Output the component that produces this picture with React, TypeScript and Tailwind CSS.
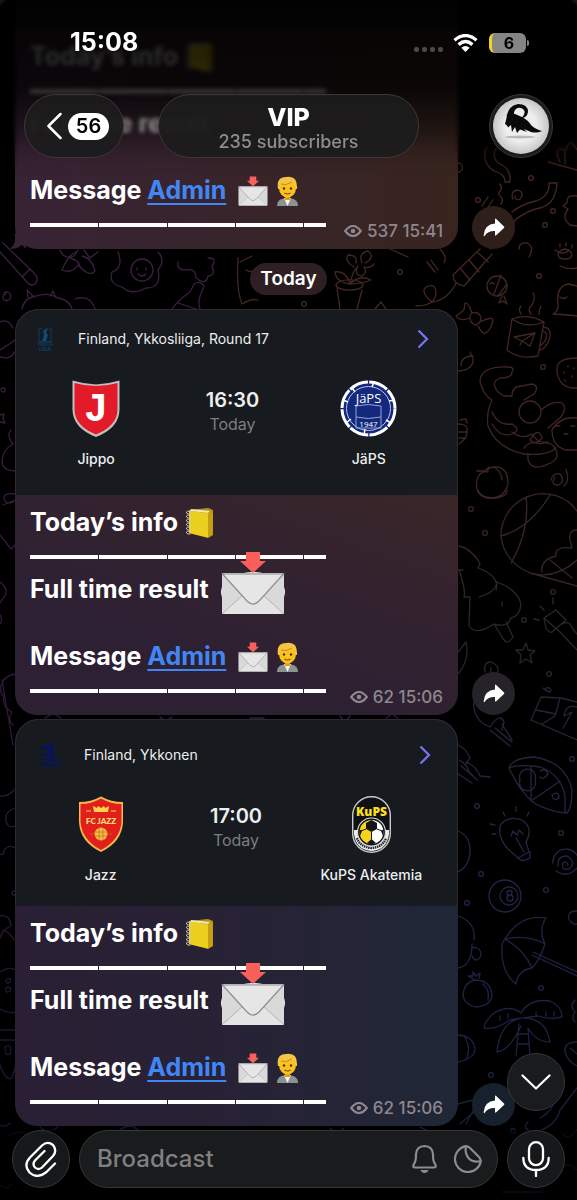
import type { ReactNode } from 'react';

interface MatchCardProps {
  league: string;
  leagueLogo: ReactNode;
  home: string;
  homeCrest: ReactNode;
  away: string;
  awayCrest: ReactNode;
  time: string;
  className?: string;
  headerClassName: string;
  gridClassName: string;
}

interface MessageProps {
  views: string;
  time: string;
  media: ReactNode;
  bodyClassName: string;
  bubbleClassName?: string;
  shareClassName: string;
  tail?: boolean;
}

const leftDoodles = [
  // pencil, bow, egg
  'M3 243 L34 273 M0 252 L26 281 M34 273 Q40 279 35 284 Q31 287 26 281 M30 269 L22 277',
  'M62 270 Q68 255 76 252 M62 270 Q72 274 78 265 Q90 278 95 271 Q92 258 82 256 M70 258 q8 2 10 8',
  'M118 252 Q124 268 112 272 Q108 284 122 287 Q132 296 146 288 Q162 288 158 270 Q166 260 158 252 M131 270 a11 11 0 1 0 22 0 a11 11 0 1 0 -22 0 M137 268 v2 M146 268 v2 M138 274 q4 4 8 0',
  // drumstick and bottle
  'M178 262 Q176 270 186 270 Q196 268 196 278 Q206 286 208 276 Q216 276 212 266 Q218 258 208 258 M172 309 Q178 300 190 292 L194 284 Q200 280 204 286 L200 296 Q198 304 200 309 M178 303 L196 309',
  // cake
  'M22 309 Q24 298 36 296 Q48 292 58 298 Q70 300 72 309 M28 297 L27 290 L33 296 M50 296 L53 291 L56 298 M75 299 Q90 294 95 309',
  'M4 293 q5 -3 7 3 q-1 6 -7 4 q-3 -5 2 -6 M0 322 Q8 318 13 328 M0 350 Q10 344 15 340 M0 357 Q12 360 14 352',
  'M0 415 l4 -1 -1 5 2 4 -5 -1 M11 430 Q6 435 13 444 Q2 450 2 462 Q2 470 15 471 M15 494 Q4 492 4 499 Q7 505 14 502 M3 505 L15 500 M0 535 L11 549 L15 545',
  'M0 582 Q10 590 4 597 L0 603 M0 615 q3 4 0 9 M15 674 Q4 676 2 684 Q-2 690 4 697 Q2 707 12 712 Q7 720 13 725 M2 680 L13 745',
  'M0 796 Q8 797 14 790 M15 808 Q4 812 6 821 Q8 829 15 826 M0 854 Q4 856 4 850 Q10 844 15 848 M0 916 Q10 914 11 926 Q2 930 0 938 M3 930 Q10 932 14 940',
  'M0 972 Q10 966 15 970 M6 980 q6 -4 4 2 q-4 3 -4 -2 M6 988 q6 -3 4 3 q-5 3 -4 -3 M0 1009 Q8 1014 15 1012 M0 1030 H15 M0 1040 L15 1040 M5 1047 q8 -4 5 7 q-5 3 -5 -7 M0 1065 Q6 1082 12 1078 L15 1068',
  'M0 1125 Q5 1128 10 1123 M8 1136 Q24 1128 26 1136 M40 1127 q8 8 18 0 M120 1130 q10 -8 18 0 M0 1185 Q6 1192 12 1184 M60 250 q4 10 14 6 l4 -6 M84 250 l6 8 8 -6',
];

const rightDoodles = [
  // streamers and flower near the header
  'M487 147 C482 155 485 168 497 172 C503 174 505 178 505 182 L510 182 C511 170 505 166 500 164 C493 160 493 152 497 147 M548 162 L577 170 M560 162 Q552 146 566 150 Q570 136 577 150 M565 164 v-14',
  'M458 163 a4 4 0 1 1 0 9 M500 184 q3 4 0 7 q-3 3 1 6 q3 3 0 7 M513 199 q-3 -8 5 -9 q7 3 2 9 q-5 2 -5 -3 M549 183 L557 183 Q556 204 540 208 Q528 210 515 220 M549 183 Q550 196 536 201 Q522 204 512 212 M490 249 L515 221 M482 206 L488 197 M493 200 L486 210',
  'M577 196 Q566 194 567 203 L563 206 L568 209 Q561 218 570 225 L577 226 M519 249 q0 -7 8 -6 q8 4 2 14 M559 252 q6 -6 12 0 q3 7 -6 7 q-9 0 -6 -7 M560 244 v3 M566 243 v3 M572 245 v3',
  // plant in a pot
  'M336 285 a13 5 0 1 1 27 0 a13 5 0 1 1 -27 0 M337 288 L340 309 M362 290 L357 309 M350 284 Q352 272 358 266 M350 284 Q346 270 335 272 Q336 282 350 284 Q362 284 371 280 Q360 274 350 284 M354 267 q-10 -6 -6 -12 q10 0 8 8 M362 263 q-4 -10 6 -12 q8 6 -3 12 M357 268 q-2 8 5 8 q6 -4 2 -9 q6 2 10 -3',
  // rocket with string
  'M453 275 L480 249 M464 286 L492 254 M453 275 Q453 284 464 286 M460 268 L470 280 M469 260 L479 272 M477 252 L488 262 M456 283 Q448 300 432 302 Q420 292 426 287 Q436 282 436 294 Q434 306 416 306 M427 262 L435 272 M431 260 L438 270 M375 309 L381 302 L386 309',
  'M487 286 a10 10 0 1 1 20 0 a10 10 0 1 1 -20 0 M501 275 L494 294 M507 284 L498 296 M502 296 L499 303 L503 301 L507 304 L504 296 M490 284 q2 -3 4 0',
  // bow, mug, ghost
  'M472 313 Q468 302 465 303 L464 310 L456 316 Q460 322 470 318 M480 322 Q492 316 493 320 L491 327 Q486 335 483 333 Q480 330 478 326 M472 313 q6 -2 9 4 q0 7 -6 8 q-6 -3 -5 -9z',
  'M512 319 L507 350 Q520 360 538 356 L544 322 Q528 313 512 319 Q526 329 544 322 M543 327 Q553 328 549 340 Q545 350 539 350 M543 331 Q549 333 545 341 L540 346 M514 337 L535 333 L530 346 L522 341 Z M522 341 L535 333 M522 341 L520 345 M521 314 q-3 -4 0 -8 M531 314 Q527 309 532 305 Q536 298 533 293 M539 314 q0 -4 2 -8',
  'M553 314 Q558 312 558 305 Q556 286 568 284 L577 286 M560 297 q4 3 7 0 M553 314 L568 315 L577 316 M577 358 Q556 358 557 370 Q558 386 572 388 L577 388 M564 372 v1 M568 366 v1 M572 376 v1 M565 380 v1 M574 368 v1 M458 371 Q474 370 473 358 L470 352 M473 356 q-12 0 -12 10',
  // cat and fruit
  'M512 372 Q515 367 508 367 Q480 366 480 382 Q484 396 492 400 Q486 412 488 426 Q496 448 524 454 Q548 456 556 448 M512 372 Q512 378 500 378 Q490 382 498 392 L504 396 H512 Q512 386 522 386 L532 384 Q540 386 534 394 L524 400',
  'M519 412 a11 11 0 1 0 22 0 a11 11 0 1 0 -22 0 M541 410 Q552 400 562 403 Q568 408 560 418 L548 428 M492 412 q6 14 20 12 q10 6 0 10 q-12 4 -20 -10 M512 432 q10 8 20 2 q6 10 16 8 M530 440 q8 -14 12 -2 q-6 8 -12 2 M524 448 Q530 440 540 444 Q552 440 556 450 Q560 460 548 464 Q532 472 528 460 L528 454 M552 430 Q560 416 577 418 M552 430 Q552 446 566 450 L577 450 M556 426 h4 M564 434 h4 M571 426 h4',
  'M460 420 l6 -1 1 4 M458 424 q10 0 9 6 q1 8 -8 14 M459 432 h8 M459 438 h7 M477 480 Q474 494 486 498 Q504 500 508 484 Q508 466 494 467 Q486 468 488 472 Q480 470 477 480 M494 467 Q502 472 502 480 M477 471 l8 0 4 -4',
  'M551 480 q2 -8 9 -6 q6 8 -2 11 q-8 0 -3 -8 M566 469 q4 12 -2 17 M478 490 Q480 498 496 498 Q508 496 507 490',
  // ball, racket
  'M501 536 a42 42 0 0 1 76 -25 M501 536 Q504 562 530 573 Q555 580 577 560 M526 497 Q530 530 511 563 M501 536 Q530 528 550 495 M577 530 Q568 530 570 540 L572 548 Q554 546 556 556 Q540 560 542 572 M530 573 L577 586 M550 560 L572 578',
  // tree
  'M459 546 Q470 548 480 563 L478 568 Q500 576 496 590 M458 570 L463 570 M459 570 Q466 590 464 597 L470 597 M479 597 Q496 592 497 582 Q518 590 521 604 Q520 616 511 618 Q508 628 494 624 Q476 636 469 626 L470 597 M494 624 L504 640 Q508 645 513 637 L506 622 M502 602 v4',
  'M544 618 L556 610 L566 620 L552 632 Q546 634 544 618 L560 632 L577 650 M562 624 q8 -4 10 4 L577 634 M553 598 v6 M540 606 l4 4 M534 619 l5 1',
  'M526 643 l2 7 7 1 -5 4 2 8 -6 -4 -6 4 1 -8 -5 -5 7 0z M485 672 q-2 -10 6 -10 q10 4 6 12 q-8 2 -6 -6 M458 652 L466 642 Q470 660 458 674',
  'M474 700 Q472 716 484 724 L490 727 Q500 712 504 722 L502 730 M490 730 L510 746 M495 728 L512 742 M502 724 L512 740 M543 688 l6 4 M545 690 q2 -5 6 0 q0 4 -6 0 M531 720 L541 697 L560 698 L555 716 L542 724 M531 720 L577 740 M536 710 L556 714 M577 707 Q565 704 564 716 L572 712 L563 728 M561 698 L577 702',
  // jellyfish and pizza
  'M458 745 Q466 748 470 758 L466 764 M459 760 q8 4 10 12 l8 8 M461 766 q8 6 14 12 M466 762 q10 4 14 14 L490 777 M458 774 l14 9',
  'M509 768 Q512 758 534 757 Q566 762 572 790 Q572 808 567 813 Q550 812 534 803 Q520 792 509 768 Q520 764 540 767 Q560 774 565 795 L565 812 M531 766 V801 L560 781 M520 780 a8 8 0 1 1 15 0 a8 8 0 1 1 -15 0 M540 771 q6 -3 8 3 q-5 7 -8 3 M552 795 q7 -5 7 3 q-6 4 -7 -3',
  // bulb
  'M508 849 Q498 838 500 826 Q507 815 522 820 Q534 828 526 842 L529 852 L518 858 Z M518 858 q4 5 12 0 l0 -6 M511 836 l2 -5 4 4 2 -5 4 4 M516 838 l8 14 M490 824 l5 1 M492 834 h4 M503 812 l2 4 M516 807 v4 M529 812 l-2 4',
  'M553 863 a13 13 0 1 1 25 4 M578 867 q-10 12 -22 4 M558 866 q-1 -10 9 -10 q10 6 2 13 q-8 2 -6 -6 q4 -3 5 2 M489 896 a16 16 0 1 1 32 0 a16 16 0 1 1 -32 0 M500 896 a9 9 0 1 1 18 0 a9 9 0 1 1 -18 0 M507 893 a2 2 0 1 1 5 0 a2 2 0 1 1 -5 0 M507 898 a3 3 0 1 1 6 0 a3 3 0 1 1 -6 0 M458 831 Q470 836 470 850 Q470 866 458 872',
  // umbrella
  'M505 939 Q520 914 546 918 Q538 930 545 944 Q540 960 532 968 Q518 970 516 984 Q500 972 502 944 Z M505 939 Q528 934 545 944 M505 939 Q524 950 532 968 M533 952 L577 972 M532 955 L577 976 M577 911 q-10 0 -8 8 q3 6 8 5 M458 916 Q476 922 474 940',
  'M458 968 Q472 966 472 944 M472 948 a6 6 0 1 1 5 12 a6 6 0 0 1 -5 -4 M464 990 Q460 1002 475 1007 Q492 1006 492 994 Q490 980 475 980 Q466 982 464 990 M475 980 l-7 -4 5 0 0 -4 3 4 4 -3 -1 5 M483 984 Q490 990 488 1000',
  // palm
  'M521 1013 Q510 1004 494 1013 Q484 1022 484 1028 Q496 1030 510 1020 L521 1018 M521 1013 Q530 998 550 1001 Q562 1006 562 1017 Q550 1020 538 1016 L523 1018 M521 1018 Q500 1022 497 1052 Q510 1050 521 1026 M523 1018 Q546 1018 550 1042 Q536 1042 528 1028 M519 1024 L516 1056 M528 1028 L530 1056 M518 1034 h10 M517 1044 h12 M500 1020 v-4 M508 1018 v-4 M536 1012 v4 M546 1012 v4 M554 1012 v4',
  'M458 1035 Q474 1036 475 1050 Q474 1058 458 1062 M464 1036 q8 12 2 24 M577 1042 Q564 1042 565 1052 Q568 1062 577 1066 M570 1048 l7 6 M458 1104 L480 1098 L466 1124 M460 1124 L474 1112 M528 1122 Q520 1130 536 1132 Q556 1126 560 1110 L577 1088 M540 1118 Q552 1112 556 1098 M577 1130 q-10 12 -14 4',
  'M575 1000 q-6 6 0 12 q-4 6 0 10 M502 1192 h40 M560 1170 q8 -10 17 0 M330 1128 q6 8 14 0 M420 1127 l12 6 M386 718 l6 -4 6 4 M340 716 l5 6 5 -6 M250 718 h14 M160 717 q6 6 12 0 M45 718 l8 -5 8 5',
  'M238 258 Q236 290 242 304 Q252 298 258 300 M240 262 L252 256 M246 270 q6 4 10 -2 M390 249 l18 8 M440 249 q8 8 4 14 M560 266 Q568 270 577 268 M555 250 q8 6 14 0',
];

const dots = [
  [531, 178], [478, 200], [553, 211], [545, 225], [400, 272], [304, 304], [539, 276],
  [543, 367], [471, 509], [485, 533], [553, 592], [524, 620], [549, 674], [572, 759],
  [477, 806], [561, 833], [481, 874], [546, 890], [467, 903], [541, 988], [491, 1075], [513, 1131],
];

function Wallpaper() {
  return (
    <svg
      className="absolute inset-0 w-full h-full"
      viewBox="0 0 577 1200"
      preserveAspectRatio="xMidYMin slice"
      fill="none"
      strokeWidth="1.3"
      strokeLinecap="round"
      strokeLinejoin="round"
      aria-hidden="true"
    >
      <defs>
        <linearGradient id="wallLeft" gradientUnits="userSpaceOnUse" x1="0" y1="0" x2="0" y2="1200">
          <stop offset="0.2" stopColor="#3b1f40" />
          <stop offset="0.65" stopColor="#2c1838" />
          <stop offset="1" stopColor="#17152c" />
        </linearGradient>
        <linearGradient id="wallRight" gradientUnits="userSpaceOnUse" x1="0" y1="0" x2="0" y2="1200">
          <stop offset="0.2" stopColor="#44271f" />
          <stop offset="0.42" stopColor="#3c2424" />
          <stop offset="0.55" stopColor="#28232f" />
          <stop offset="0.7" stopColor="#232548" />
          <stop offset="1" stopColor="#141e3c" />
        </linearGradient>
      </defs>
      <g stroke="url(#wallLeft)">
        {leftDoodles.map((d) => <path key={d} d={d} />)}
        <circle cx="3" cy="390" r="2" />
        <circle cx="14" cy="893" r="2" />
      </g>
      <g stroke="url(#wallRight)">
        {rightDoodles.map((d) => <path key={d} d={d} />)}
        {dots.map(([x, y]) => <circle key={`${x}-${y}`} cx={x} cy={y} r="2.4" />)}
      </g>
    </svg>
  );
}

function Notebook() {
  return (
    <svg className="w-[27px] h-[30px]" viewBox="0 0 27 30" aria-label="notebook" role="img">
      <path d="M3 2 L22 0 L27 2 V27 L22 30 L3 25Z" fill="#b8930f" />
      <path d="M5 1 L24 3 L22 5 L4 3Z" fill="#ece6c6" />
      <path d="M3 2.5 L22 5.5 V29.5 L3 25Z" fill="#ecd01f" />
      <path d="M22 5.5 L26.5 3 V27 L22 29.5Z" fill="#c79f12" />
      {[4, 8, 12, 16, 20, 24].map((y) => (
        <path key={y} d={`M5 ${y} q-5 -2 -4.500 1 q1 1.500 4 1`} fill="none" stroke="#cfc9b4" strokeWidth="1" />
      ))}
    </svg>
  );
}

function Envelope({ className, disc = false }: { className: string; disc?: boolean }) {
  return (
    <svg className={className} viewBox="0 0 64 62" aria-label="incoming envelope" role="img">
      {disc && <ellipse cx="32" cy="40" rx="32" ry="20" fill="#fff" />}
      <rect x="1" y="21" width="62" height="41" rx="1.500" fill="#d9d9da" />
      <path d="M1 62 L24 41 H40 L63 62Z" fill="#e4e4e5" />
      <path d="M2 61 L22 43 M62 61 L42 43" stroke="#b3b3b5" strokeWidth="1" fill="none" />
      <path d="M1.500 22 L26 49 Q32 55 38 49 L62.500 22Z" fill="#e6e6e7" stroke="#8f8f92" strokeWidth="1.200" />
      <path d="M25 0 H39 V9 H45 L32 21 L19 9 H25Z" fill="#f9605c" />
    </svg>
  );
}

function OfficeWorker() {
  return (
    <svg className="w-[23px] h-[30px]" viewBox="0 0 23 30" aria-label="office worker" role="img">
      <path d="M1 30 Q1 23 8 22.500 H15 Q22 23 22 30Z" fill="#8b9391" />
      <path d="M8 22 L11.500 30 L15 22Z" fill="#f4f4f4" />
      <rect x="9" y="18" width="5" height="6" fill="#e39b10" />
      <ellipse cx="11.500" cy="12" rx="8.500" ry="9.500" fill="#fbc21d" />
      <path d="M2 13 Q0 1 10 1 Q22 -1 21 13 L19 13 Q19 8 16 7 Q9 10 5 8 L4 13Z" fill="#f5c445" />
      <path d="M5 8 Q10 10 16 6" stroke="#c98a10" strokeWidth="1" fill="none" />
      <circle cx="8" cy="12.500" r="1.200" fill="#4b2f0c" />
      <circle cx="15" cy="12.500" r="1.200" fill="#4b2f0c" />
      <path d="M8.500 17 Q11.500 19 14.500 17" stroke="#7b4a0c" strokeWidth="1.200" fill="none" />
    </svg>
  );
}

function JippoCrest() {
  return (
    <svg className="h-[57px] w-12" viewBox="0 0 48 57" aria-hidden="true">
      <path d="M0.500 0.500 Q12 4 24 4.500 Q36 4 47.500 0.500 V30 Q47 48 24 57 Q1 48 0.500 30Z" fill="#c2bfc0" />
      <path d="M2.500 3 Q13 6 24 6 Q35 6 45.500 3 V30 Q45 46 24 54.500 Q3 46 2.500 30Z" fill="#e31b28" />
      <text x="24" y="41" textAnchor="middle" fontSize="40" fontWeight="700" fill="#fff" fontFamily="Liberation Mono, monospace">J</text>
    </svg>
  );
}

function JapsCrest() {
  return (
    <svg className="h-[57px] w-[57px]" viewBox="0 0 57 57" aria-hidden="true">
      <circle cx="28.500" cy="28.500" r="28" fill="#14297b" />
      <circle cx="28.500" cy="28.500" r="26.500" fill="none" stroke="#fff" strokeWidth="3" strokeDasharray="19.500 1.300" />
      <circle cx="28.500" cy="28.500" r="22" fill="none" stroke="#b7c2e6" strokeWidth="1" />
      <path d="M34 2 L32 7 M55 20 L49 21 M51 43 L46 40 M24 55 L25 49 M6 43 L11 39 M3 20 L8 22 M12 8 L15 12" stroke="#fff" strokeWidth="1.500" />
      <path d="M16 26 Q28 23 41 26 V48 H16Z M16 37 Q28 40 41 37" fill="none" stroke="#93a3d8" strokeWidth="1" />
      <text x="28.500" y="23" textAnchor="middle" fontSize="13" fontWeight="500" fill="#fff" fontFamily="Open Sans, sans-serif">JäPS</text>
      <text x="28.500" y="47" textAnchor="middle" fontSize="8" fill="#fff" fontFamily="Open Sans, sans-serif">1947</text>
    </svg>
  );
}

function JazzCrest() {
  return (
    <svg className="h-[57px] w-12" viewBox="0 0 48 57" aria-hidden="true">
      <path d="M24 0.500 Q34 6 46 6 V26 Q45 46 24 56 Q3 46 2 26 V6 Q14 6 24 0.500Z" fill="#f8b64c" />
      <path d="M24 2.500 Q34 8 44.500 8 V26 Q43 44 24 54 Q5 44 3.500 26 V8 Q14 8 24 2.500Z" fill="#e2201b" />
      <path d="M17 16 L16 10 L20 12 L21 10 L24 12 L27 10 L28 12 L32 10 L31 16Z M9 14.500 h5 v1 h-5z M34 14.500 h5 v1 h-5z" fill="#ffd34a" />
      <text x="24" y="28" textAnchor="middle" fontSize="8" fontWeight="800" fill="#ffd97a" fontFamily="Lato, sans-serif">FC JAZZ</text>
      <circle cx="24" cy="38" r="6.500" fill="#f6bf4a" />
      <path d="M18 36 H30 M18 40 H30 M22 32 V44 M26 32 V44 M13 38 h3 M32 38 h3" stroke="#c9741b" strokeWidth="0.800" />
    </svg>
  );
}

function KupsCrest() {
  return (
    <svg className="h-[57px] w-[39px]" viewBox="0 0 39 57" aria-hidden="true">
      <rect x="0.700" y="0.700" width="37.600" height="55.600" rx="18.800" fill="#101114" stroke="#c9cacc" strokeWidth="1.400" />
      <path d="M2 34 H37 V38 Q35 54 19.500 55 Q4 54 2 38Z" fill="#ececec" />
      <path d="M5 42 Q8 51 19.500 52 Q31 51 34 42" fill="none" stroke="#222" strokeWidth="2.400" strokeDasharray="1.500 0.700" />
      <circle cx="19.500" cy="36" r="14" fill="#101114" stroke="#d8d8d8" strokeWidth="1.200" />
      <path d="M19.500 24 A12 12 0 0 0 19.500 48Z" fill="#f7d51c" />
      <path d="M19.500 24 A12 12 0 0 1 19.500 48Z" fill="#fff" />
      <path d="M14 27 L19.500 24 L25 27 V33 L19.500 36 L14 33Z M7 33 L10 35 L8 40Z M32 33 L29 35 L31 40Z M15 47 L19.500 43 L24 47 L19.500 49Z" fill="#15161a" />
      <path d="M19.500 36 V43 M14 33 L9 35 M25 33 L30 35" stroke="#15161a" strokeWidth="1" />
      <text x="19.500" y="20" textAnchor="middle" fontSize="12" fontWeight="900" fill="#ffe11c" fontFamily="Open Sans, sans-serif">KuPS</text>
    </svg>
  );
}

function YkkosliigaLogo() {
  return (
    <svg className="w-[18px] h-6" viewBox="0 0 18 24" aria-hidden="true">
      <path d="M6 1.500 H3 V14.500 H15 V1.500 H13" fill="none" stroke="#0c3a5e" strokeWidth="1" />
      <path d="M7 4 L12 0 L10 6 L12 8 L10 14 H6 L8 8Z" fill="#0f4a78" />
      <text x="9" y="19" textAnchor="middle" fontSize="4.500" fontWeight="700" fill="#0d4069" fontFamily="Inter, sans-serif">YKKÖS</text>
      <text x="9" y="23.500" textAnchor="middle" fontSize="4.500" fontWeight="700" fill="#0d4069" fontFamily="Inter, sans-serif">LIIGA</text>
    </svg>
  );
}

function YkkonenLogo() {
  return (
    <svg className="w-5 h-6" viewBox="0 0 20 24" aria-hidden="true" fill="#0a1550">
      <path d="M1 5 L8 0 H14 V15 H20 V18 H4 V15 H9 V13 H1 V10 H8 V7 H1Z" />
      <path d="M0 20 H20 V23 H0Z" />
    </svg>
  );
}

function MatchCard({
  league, leagueLogo, home, homeCrest, away, awayCrest, time, className = '', headerClassName, gridClassName,
}: MatchCardProps) {
  return (
    <div className={`bg-[#171a1e] text-[#eceef0] rounded-t-[24px] ${className}`}>
      <div className={`flex items-center h-6 text-sm ${headerClassName}`}>
        {leagueLogo}
        <span className="flex-1 ml-6">{league}</span>
        <svg className="w-3 h-5" viewBox="0 0 12 20" fill="none" stroke="#7477f5" strokeWidth="2.200" aria-hidden="true">
          <path d="M1.500 1.500 L10 10 L1.500 18.500" />
        </svg>
      </div>
      <div className={`grid grid-cols-3 mt-[29px] text-center ${gridClassName}`}>
        <div className="flex flex-col items-center">
          {homeCrest}
          <span className="mt-3 text-sm leading-5 font-medium">{home}</span>
        </div>
        <div className="flex flex-col pt-2">
          <span className="text-xl leading-6 font-semibold">{time}</span>
          <span className="text-base leading-6 text-[#7b7e81]">Today</span>
        </div>
        <div className="flex flex-col items-center">
          {awayCrest}
          <span className="mt-3 text-sm leading-5 font-medium whitespace-nowrap">{away}</span>
        </div>
      </div>
    </div>
  );
}

function Rule() {
  return (
    <div className="flex items-center gap-px h-[33px]" role="separator">
      <span className="w-[68px] h-1 bg-white" />
      <span className="w-[68px] h-1 bg-white" />
      <span className="w-[67px] h-1 bg-white" />
      <span className="w-[67px] h-1 bg-white" />
      <span className="w-[22px] h-1 bg-white" />
    </div>
  );
}

function ShareButton({ className }: { className: string }) {
  return (
    <button aria-label="Share" className={`w-[43px] h-[43px] rounded-full flex items-center justify-center flex-shrink-0 ${className}`}>
      <svg className="w-[22px] h-5" viewBox="0 0 22 20" fill="#fff" aria-hidden="true">
        <path d="M12 1.500 Q12 0 13.200 1 L21 8.500 Q21.800 9.200 21 10 L13.200 17.300 Q12 18.200 12 16.800 V13 Q5 12.600 2 17.600 Q0.600 19 0.700 17 Q1.500 6.500 12 5.500Z" />
      </svg>
    </button>
  );
}

function Message({ views, time, media, bodyClassName, bubbleClassName = '', shareClassName, tail }: MessageProps) {
  return (
    <article className="flex items-end gap-[14px] pl-[15px]">
      <div className="relative flex-1 max-w-[443px]">
        {tail && (
          <svg className="absolute -left-[5px] bottom-0 w-4 h-4" viewBox="0 0 16 16" fill="#382335" aria-hidden="true">
            <path d="M5 0 V8 Q4 13 0 15.500 Q7 16.500 12 12 L16 16 V0Z" />
          </svg>
        )}
        <div className={`relative rounded-b-[22px] ${bubbleClassName} ${bodyClassName}`}>
          {media}
          <div className="px-[15px] pt-[11px] pb-2 text-[25px] font-bold text-white">
            <div className="flex items-center gap-2 h-[34px]">
              <span>Today’s info</span>
              <Notebook />
            </div>
            <Rule />
            <div className="flex items-center gap-2 h-[34px]">
              <span>Full time result</span>
              {!tail && <Envelope className="relative w-16 h-[62px] ml-1 -mt-[21px] -mb-[7px]" disc />}
            </div>
            <div className="h-[33px]" />
            <div className="flex items-center gap-2 h-[34px]">
              <span>Message <a href="#admin" className="text-[#4286f5] underline decoration-2 underline-offset-4">Admin</a></span>
              <Envelope className="ml-1 w-[30px] h-[30px]" />
              <OfficeWorker />
            </div>
            <div className="flex items-start justify-between">
              <Rule />
              <div className="flex items-center gap-[5px] mt-[13px] text-[17px] leading-5 font-medium text-[#8f878e]">
                <svg className="w-[18px] h-3" viewBox="0 0 18 12" fill="none" stroke="currentColor" strokeWidth="2.200" aria-hidden="true">
                  <path d="M1.200 6 Q9 -4 16.800 6 Q9 16 1.200 6Z" />
                  <circle cx="9" cy="6" r="2.300" fill="currentColor" stroke="none" />
                </svg>
                <span>{views} {time}</span>
              </div>
            </div>
          </div>
        </div>
      </div>
      <ShareButton className={shareClassName} />
    </article>
  );
}

function StatusBar() {
  return (
    <div className="flex items-center h-[86px] pl-[70px] pr-12">
      <span className="flex-1 text-[25px] font-bold text-white">15:08</span>
      <div className="flex gap-[3px] mt-3 mr-[10px]">
        <span className="w-[5px] h-[5px] rounded-[2px] bg-[#4c4a49]" />
        <span className="w-[5px] h-[5px] rounded-[2px] bg-[#4c4a49]" />
        <span className="w-[5px] h-[5px] rounded-[2px] bg-[#4c4a49]" />
        <span className="w-[5px] h-[5px] rounded-[2px] bg-[#4c4a49]" />
      </div>
      <svg className="w-[25px] h-[18px] mr-[11px]" viewBox="0 0 25 18" fill="none" stroke="#fff" strokeWidth="3.400" aria-hidden="true">
        <path d="M1.500 6.200 Q12.500 -3 23.500 6.200" />
        <path d="M5.600 10.600 Q12.500 4.600 19.400 10.600" />
        <path d="M12.500 18 L8.300 13.800 Q12.500 10.300 16.700 13.800Z" fill="#fff" stroke="none" />
      </svg>
      <div className="flex items-center gap-px">
        <div className="w-[37px] h-5 rounded-[6px] bg-[#858585] border-l-[3px] border-[#f5d31b] flex items-center justify-center text-base leading-5 font-bold text-black">
          6
        </div>
        <span className="w-[2px] h-[6px] rounded-r bg-[#858585]" />
      </div>
    </div>
  );
}

function GoatAvatar() {
  return (
    <svg className="w-14 h-14" viewBox="0 0 56 56" aria-hidden="true">
      <defs>
        <radialGradient id="avatarBg" cx="0.500" cy="0.500" r="0.550">
          <stop offset="0.500" stopColor="#eeeeee" />
          <stop offset="1" stopColor="#bdbdbf" />
        </radialGradient>
      </defs>
      <circle cx="28" cy="28" r="28" fill="url(#avatarBg)" />
      <ellipse cx="27" cy="39" rx="15" ry="1.500" fill="#b9b9bb" />
      <g fill="#0a0a0a">
        <path d="M14 18 Q15 8 25 6 Q35 6 35 14 Q34 20 28 20 Q32 17 31.500 13 Q29 9 24.500 10 Q20.500 12 21 17 L18 20Z" />
        <path d="M14 16 L22 16 L29 19 Q35 22 38 27 Q42 31 49 33 Q44 35.500 38 34 L31 31 L34 34 L27 31.500 L24 35 L22 29 L19 34 L18 27 L15 29.500 L14 27.500 L12 26 L13.500 20Z" />
      </g>
    </svg>
  );
}

function Header() {
  return (
    <header className="fixed top-0 inset-x-0 z-20">
      <div className="absolute inset-x-0 top-0 h-[176px] backdrop-blur-[2px] bg-gradient-to-b from-black/90 via-black/80 to-transparent [mask-image:linear-gradient(to_bottom,black_75%,transparent)]" />
      <div className="relative">
        <StatusBar />
        <div className="grid grid-cols-[1fr_auto_1fr] items-center px-6 pt-2">
          <button aria-label="Back, 56 unread" className="justify-self-start w-[100px] h-16 pl-2 rounded-full bg-[#1c1b1c]/95 border border-[#3a393a] flex items-center justify-center gap-[6px]">
            <svg className="w-[15px] h-7" viewBox="0 0 15 28" fill="none" stroke="#fff" strokeWidth="2.500" strokeLinecap="round" strokeLinejoin="round" aria-hidden="true">
              <path d="M13.500 2 L1.500 14 L13.500 26" />
            </svg>
            <span className="w-[41px] h-[27px] rounded-full bg-white text-black text-xl leading-[27px] font-semibold text-center">56</span>
          </button>
          <button className="w-[261px] h-16 rounded-full bg-[#1c1b1c]/95 border border-[#3a393a] flex flex-col items-center justify-center pt-1">
            <span className="text-[25px] leading-7 font-extrabold text-white">VIP</span>
            <span className="text-lg leading-[22px] font-medium text-[#8e8c8d]">235 subscribers</span>
          </button>
          <button aria-label="Channel info" className="justify-self-end w-16 h-16 rounded-full bg-[#1c1b1d] border border-[#3a393a] flex items-center justify-center">
            <GoatAvatar />
          </button>
        </div>
      </div>
    </header>
  );
}

function Composer() {
  const round = 'w-[58px] h-[58px] rounded-full border border-[#343637] flex items-center justify-center flex-shrink-0';
  return (
    <footer className="sticky bottom-0 z-20 mt-1 px-3 pb-3 bg-black/60">
      <button aria-label="Scroll to bottom" className={`absolute right-3 bottom-[89px] bg-[#1a1b1c] ${round}`}>
        <svg className="w-[30px] h-4" viewBox="0 0 30 16" fill="none" stroke="#fff" strokeWidth="2.200" strokeLinecap="round" strokeLinejoin="round" aria-hidden="true">
          <path d="M1.500 1.500 L15 14.500 L28.500 1.500" />
        </svg>
      </button>
      <form className="flex items-center gap-[9px]">
        <button type="button" aria-label="Attach" className={`bg-[#16191a] ${round}`}>
          <svg className="w-8 h-9" viewBox="0 0 32 36" fill="none" stroke="#fff" strokeWidth="2.300" strokeLinecap="round" strokeLinejoin="round" aria-hidden="true">
            <path d="M30 22.500 L21.500 31 Q12 38.500 4.500 31.500 Q-2 24 5 16.500 L17 4.500 Q22.500 -0.500 28 4 Q32.500 9.500 28 15 L17 26.500 Q13.500 29.500 10 26.500 Q7 23 10 19.500 L19.500 10" />
          </svg>
        </button>
        <div className="flex-1 min-w-0 flex items-center h-[58px] pl-[17px] pr-[15px] rounded-full bg-[#1a1b1c] border border-[#343637]">
          <input aria-label="Broadcast" placeholder="Broadcast" className="flex-1 min-w-0 bg-transparent outline-none text-2xl font-medium text-white placeholder:text-[#7f8081]" />
          <button type="button" aria-label="Silent broadcast" className="mr-[17px]">
            <svg className="w-[25px] h-[30px]" viewBox="0 0 25 30" fill="none" stroke="#8b8c8d" strokeWidth="2.200" strokeLinejoin="round" aria-hidden="true">
              <path d="M12.500 2 Q4.500 2.500 4 10 Q4 16 3 18 L1.500 21 Q0.700 23.500 3 23.500 H22 Q24.300 23.500 23.500 21 L22 18 Q21 16 21 10 Q20.500 2.500 12.500 2Z" />
              <path d="M8.500 26 H16.500 Q15.500 29 12.500 29 Q9.500 29 8.500 26Z" fill="#8b8c8d" stroke="none" />
            </svg>
          </button>
          <button type="button" aria-label="Stickers">
            <svg className="w-7 h-7" viewBox="0 0 28 28" fill="none" stroke="#8b8c8d" strokeWidth="2.200" strokeLinejoin="round" aria-hidden="true">
              <path d="M12 1.200 A13 13 0 1 0 26.800 16 Q26.500 13.500 24.500 11.500 L16.500 3.500 Q14.500 1.500 12 1.200Z" />
              <path d="M12 1.200 Q10.500 8 14.500 13 Q19 18 26.800 16" />
            </svg>
          </button>
        </div>
        <button type="button" aria-label="Record voice" className={`bg-[#17181a] ${round}`}>
          <svg className="w-7 h-9" viewBox="0 0 28 36" fill="none" stroke="#fff" strokeWidth="2.300" strokeLinecap="round" aria-hidden="true">
            <rect x="7" y="1.200" width="14" height="23" rx="7" />
            <path d="M1.300 17 Q1.500 29 14 29 Q26.500 29 26.700 17 M14 29 V35" />
          </svg>
        </button>
      </form>
    </footer>
  );
}

export default function App() {
  return (
    <div className="bg-white">
      <div className="relative min-h-screen bg-black rounded-t-lg font-[Inter,sans-serif]">
        <Wallpaper />
        <Header />
        <main className="relative">
          <Message
            views="537"
            time="15:41"
            tail
            media={<div className="h-[29px] bg-[#171a1e]" />}
            bodyClassName="bg-gradient-to-r from-[#382335] to-[#38251f]"
            shareClassName="bg-[#2e1f1b]"
          />
          <div className="flex justify-center py-[14px]">
            <span className="h-8 px-[10px] rounded-full bg-[#2e1f23] text-white text-[19px] leading-8 font-semibold">Today</span>
          </div>
          <Message
            views="62"
            time="15:06"
            bubbleClassName="rounded-t-[24px]"
            media={
              <MatchCard
                className="h-[186px] pt-[17px] border border-b-0 border-[#35262f]"
                headerClassName="pl-5 pr-7"
                gridClassName="pl-3 pr-5"
                league="Finland, Ykkosliiga, Round 17"
                leagueLogo={<YkkosliigaLogo />}
                home="Jippo"
                homeCrest={<JippoCrest />}
                away="JäPS"
                awayCrest={<JapsCrest />}
                time="16:30"
              />
            }
            bodyClassName="bg-[linear-gradient(200deg,#3d2824_20%,#33232f_55%,#2d2033_80%)]"
            shareClassName="bg-[#25222a]"
          />
          <div className="mt-1">
            <Message
              views="62"
              time="15:06"
              bubbleClassName="rounded-t-[24px]"
              media={
                <MatchCard
                  className="h-[187px] pt-[23px] border border-b-0 border-[#2f2934]"
                  headerClassName="pl-6 pr-[26px]"
                  gridClassName="pl-[17px] pr-[18px]"
                  league="Finland, Ykkonen"
                  leagueLogo={<YkkonenLogo />}
                  home="Jazz"
                  homeCrest={<JazzCrest />}
                  away="KuPS Akatemia"
                  awayCrest={<KupsCrest />}
                  time="17:00"
                />
              }
              bodyClassName="bg-gradient-to-r from-[#2a1f34] via-[#272235] to-[#1f2736]"
              shareClassName="bg-[#17212e]"
            />
          </div>
        </main>
        <Composer />
      </div>
    </div>
  );
}
